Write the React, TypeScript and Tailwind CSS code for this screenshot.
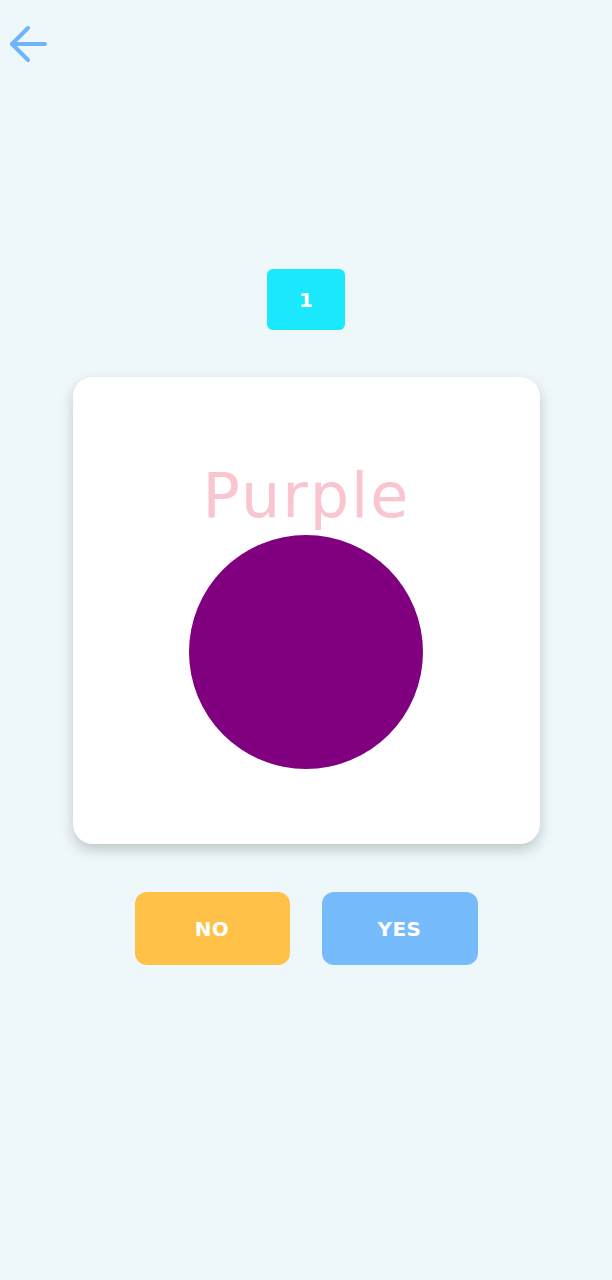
import React from "react";

function BackArrow() {
  return (
    <svg width="50" height="50" viewBox="0 0 50 50" fill="none" stroke="#6fb4f6" strokeWidth="4" strokeLinecap="round" strokeLinejoin="round">
      <path d="M28 8 L12 24 L28 40" />
      <path d="M12 24 H45" />
    </svg>
  );
}

export default function App() {
  return (
    <div className="min-h-screen bg-[#eef8fa] flex flex-col font-['DejaVu_Sans',sans-serif]">
      <div className="h-[70px] pt-5">
        <button className="block">
          <BackArrow />
        </button>
      </div>

      <div className="mt-[199px] self-center w-[78px] h-[61px] rounded-md bg-[#1ae8fd] flex items-center justify-center text-white font-bold text-[20px]">
        1
      </div>

      <div className="mt-[47px] ml-[73px] w-[467px] h-[467px] rounded-[20px] bg-white shadow-[0_6px_14px_rgba(0,0,0,0.2)] flex flex-col items-center pt-[88px]">
        <div className="text-[62px] leading-none text-[#f9c5cf] tracking-[2px]">Purple</div>
        <div className="mt-2 mr-[2px] w-[234px] h-[234px] rounded-full bg-[#800080]" />
      </div>

      <div className="mt-[48px] flex justify-center gap-8">
        <button className="w-[155px] h-[73px] rounded-xl bg-[#ffc147] text-white font-bold text-[20px] tracking-[0.5px]">NO</button>
        <button className="w-[156px] h-[73px] rounded-xl bg-[#76bbfb] text-white font-bold text-[20px] tracking-[0.5px]">YES</button>
      </div>
    </div>
  );
}
